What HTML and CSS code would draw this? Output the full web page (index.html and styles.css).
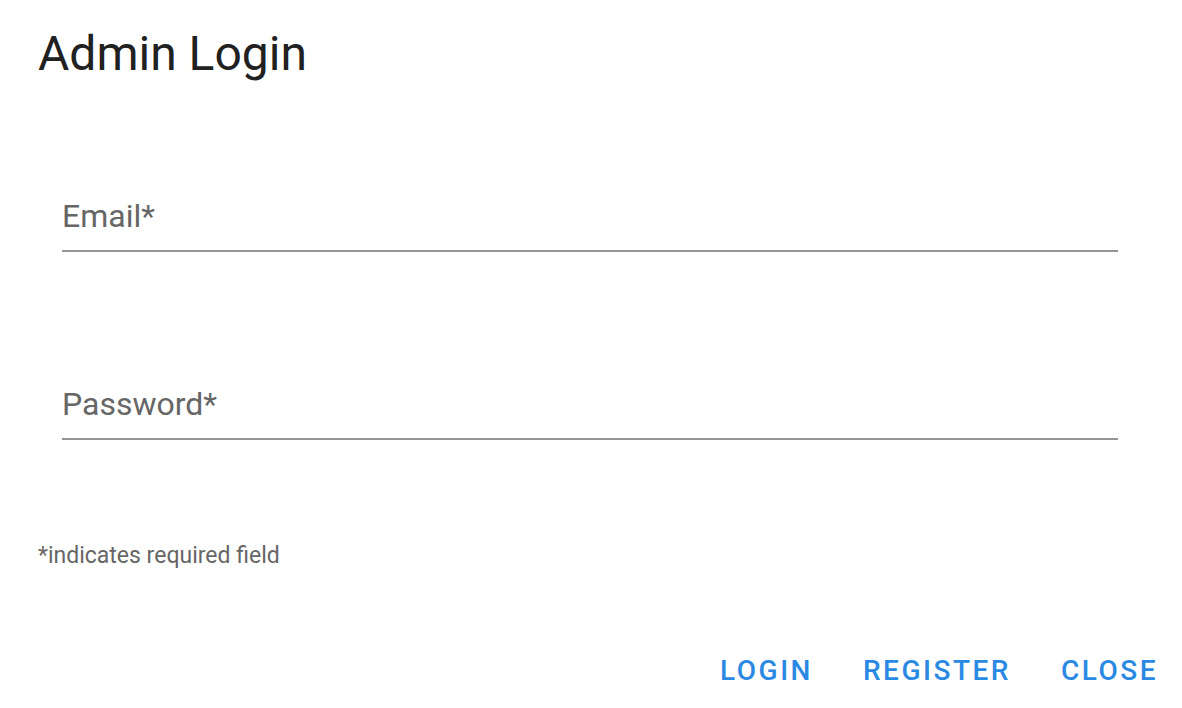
FILE: index.html
```html
<!DOCTYPE html>
<html>
<head>
<meta charset="utf-8">
<link rel="stylesheet" href="styles.css">
</head>
<body>
<div class="dialog">
  <h1 class="title">Admin Login</h1>
  <div class="fields">
    <div class="field"><span class="label">Email*</span></div>
    <div class="field"><span class="label">Password*</span></div>
  </div>
  <p class="hint">*indicates required field</p>
  <div class="actions">
    <button class="btn">LOGIN</button>
    <button class="btn">REGISTER</button>
    <button class="btn">CLOSE</button>
  </div>
</div>
</body>
</html>
```
FILE: styles.css
```css
html, body { margin: 0; padding: 0; background: #fff; }
body { font-family: Roboto, "Liberation Sans", sans-serif; }
.dialog { width: 1182px; height: 708px; box-sizing: border-box; padding: 0 24px 0 38px; display: flex; flex-direction: column; }
.title { margin: 0; padding-top: 24px; font-size: 48px; font-weight: 400; line-height: 60px; color: #212121; }
.fields { display: flex; flex-direction: column; padding: 0 40px 0 24px; margin-top: 110px; }
.field { height: 58px; padding-top: 4px; border-bottom: 2px solid #949494; display: flex; align-items: flex-start; box-sizing: border-box; }
.field + .field { margin-top: 130px; }
.label { font-size: 32px; color: #666; line-height: 36px; }
.hint { margin: 102px 0 0; font-size: 23px; color: #666; line-height: 28px; }
.actions { display: flex; justify-content: flex-end; gap: 50px; margin-top: 84px; }
.btn { border: 0; background: none; padding: 0; font-family: inherit; font-size: 28px; font-weight: 500; letter-spacing: 2.5px; color: #2a89e3; line-height: 34px; }
```
